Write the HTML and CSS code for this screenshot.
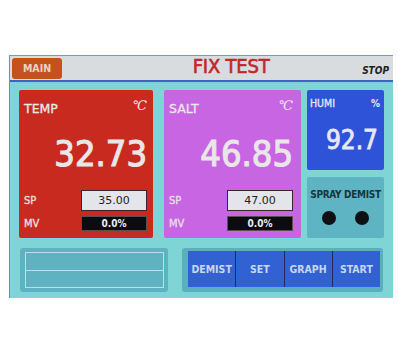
FILE: index.html
```html
<!DOCTYPE html>
<html>
<head>
<meta charset="utf-8">
<link rel="stylesheet" href="styles.css">
</head>
<body>
<div class="screen">
  <div class="header">
    <div class="main-btn">MAIN</div>
    <div class="title">FIX TEST</div>
    <div class="stop">STOP</div>
  </div>
  <div class="panel">
    <div class="cards">
      <div class="card temp">
        <div class="card-top"><span class="lbl">TEMP</span><span class="unit">℃</span></div>
        <div class="big">32.73</div>
        <div class="row sp"><span class="lbl">SP</span><span class="sp-box">35.00</span></div>
        <div class="row mv"><span class="lbl">MV</span><span class="mv-box">0.0%</span></div>
      </div>
      <div class="card salt">
        <div class="card-top"><span class="lbl">SALT</span><span class="unit">℃</span></div>
        <div class="big">46.85</div>
        <div class="row sp"><span class="lbl">SP</span><span class="sp-box">47.00</span></div>
        <div class="row mv"><span class="lbl">MV</span><span class="mv-box">0.0%</span></div>
      </div>
      <div class="side">
        <div class="humi">
          <div class="card-top"><span class="lbl small">HUMI</span><span class="pct">%</span></div>
          <div class="big-h">92.7</div>
        </div>
        <div class="spray">
          <div class="spray-lbl">SPRAY DEMIST</div>
          <div class="dots"><span class="dot"></span><span class="dot"></span></div>
        </div>
      </div>
    </div>
    <div class="bottom">
      <div class="msg">
        <div class="msg-box">
          <div class="msg-line"></div>
          <div class="msg-line"></div>
        </div>
      </div>
      <div class="btns">
        <div class="btn">DEMIST</div>
        <div class="btn">SET</div>
        <div class="btn">GRAPH</div>
        <div class="btn">START</div>
      </div>
    </div>
  </div>
</div>
</body>
</html>
```
FILE: styles.css
```css
html, body {
  margin: 0;
  padding: 0;
  background: #ffffff;
}
body {
  width: 398px;
  height: 349px;
  overflow: hidden;
  font-family: "DejaVu Sans", sans-serif;
}
.screen {
  margin: 55px 0 0 9px;
  width: 384px;
  border-left: 1px solid #6f8bc6;
  border-top: 1px solid #7f95c8;
  box-sizing: border-box;
}
.header {
  height: 26px;
  background: #d9dcde;
  border-bottom: 2px solid #3d62c2;
  box-sizing: border-box;
  display: flex;
  align-items: center;
  padding: 0 3px 0 2px;
}
.main-btn {
  width: 50px;
  height: 21px;
  margin-top: 1px;
  background: #c7511d;
  border-radius: 3px;
  color: #ecd3c6;
  font-family: "DejaVu Sans Condensed", "DejaVu Sans", sans-serif;
  font-size: 10.5px;
  font-weight: bold;
  line-height: 21px;
  text-align: center;
}
.title {
  flex: 1;
  text-align: center;
  color: #c0282a;
  font-family: "DejaVu Sans Condensed", "DejaVu Sans", sans-serif;
  font-size: 20px;
  letter-spacing: -0.2px;
  margin-left: 38px;
  margin-top: -4px;
  -webkit-text-stroke: 0.6px #c0282a;
}
.stop {
  font-family: "DejaVu Sans Condensed", "DejaVu Sans", sans-serif;
  font-size: 10px;
  font-weight: bold;
  font-style: italic;
  color: #1d1d22;
  margin-top: 4px;
  margin-right: 1px;
}
.panel {
  background: #7fd4d6;
  height: 216px;
  padding: 8px 9px 6px 9px;
  box-sizing: border-box;
}
.cards {
  display: flex;
  height: 148px;
}
.card {
  box-sizing: border-box;
  height: 148px;
  border-radius: 2px;
  padding: 11px 6px 7px 5px;
  color: #ece8ea;
  display: flex;
  flex-direction: column;
}
.temp {
  width: 134px;
  background: #c82a1f;
}
.salt {
  width: 137px;
  margin-left: 11px;
  background: #c765e3;
  padding-right: 8px;
}
.card-top {
  height: 15px;
  display: flex;
  justify-content: space-between;
  align-items: center;
}
.lbl {
  font-size: 12.5px;
  line-height: 15px;
  -webkit-text-stroke: 0.3px currentColor;
}
.lbl.small {
  font-family: "DejaVu Sans Condensed", "DejaVu Sans", sans-serif;
  font-size: 10.5px;
}
.unit {
  font-family: "DejaVu Serif", serif;
  font-style: italic;
  font-size: 13px;
  line-height: 15px;
  color: #f0e6ea;
  margin-top: -6px;
}
.big {
  margin-top: 15px;
  height: 46px;
  line-height: 46px;
  text-align: right;
  font-family: "DejaVu Sans Condensed", "DejaVu Sans", sans-serif;
  font-size: 36px;
  color: #e9e6e8;
  -webkit-text-stroke: 1.1px #e9e6e8;
}
.row {
  display: flex;
  justify-content: space-between;
  align-items: center;
}
.row .lbl {
  font-family: "DejaVu Sans Condensed", "DejaVu Sans", sans-serif;
  font-size: 11px;
  color: #e9e0e4;
}
.sp {
  height: 22px;
  margin-top: 12px;
}
.mv {
  height: 15px;
  margin-top: 5px;
}
.sp-box {
  width: 66px;
  height: 21px;
  box-sizing: border-box;
  background: #e4e5ea;
  border: 1px solid #33262c;
  color: #222;
  font-size: 11px;
  line-height: 19px;
  text-align: center;
}
.mv-box {
  width: 66px;
  height: 15px;
  box-sizing: border-box;
  background: #0c0b10;
  border: 1px solid #5a5050;
  color: #eeeeee;
  font-family: "DejaVu Sans Condensed", "DejaVu Sans", sans-serif;
  font-weight: bold;
  font-size: 10px;
  line-height: 13px;
  text-align: center;
}
.side {
  width: 77px;
  margin-left: 6px;
  display: flex;
  flex-direction: column;
}
.humi {
  height: 80px;
  background: #2f53d8;
  border-radius: 2px;
  padding: 6px 4px 0 3px;
  box-sizing: border-box;
  color: #e6e8f2;
}
.pct {
  font-family: "DejaVu Sans Condensed", "DejaVu Sans", sans-serif;
  font-size: 10px;
  font-weight: bold;
}
.big-h {
  margin-top: 16px;
  text-align: right;
  font-family: "DejaVu Sans Condensed", "DejaVu Sans", sans-serif;
  font-size: 26px;
  line-height: 26px;
  padding-right: 2px;
  -webkit-text-stroke: 0.8px #e6e8f2;
}
.spray {
  margin-top: 7px;
  height: 61px;
  background: #5eb4c2;
  border-radius: 2px;
  box-sizing: border-box;
  padding-top: 11px;
}
.spray-lbl {
  text-align: center;
  font-family: "DejaVu Sans Condensed", "DejaVu Sans", sans-serif;
  font-size: 10px;
  font-weight: bold;
  color: #17343e;
  letter-spacing: -0.3px;
  line-height: 14px;
}
.dots {
  display: flex;
  justify-content: space-around;
  padding: 9px 6px 0 6px;
}
.dot {
  width: 14px;
  height: 14px;
  border-radius: 50%;
  background: #0e1014;
}
.bottom {
  display: flex;
  margin-top: 10px;
  height: 44px;
}
.msg {
  width: 148px;
  margin-left: 1px;
  background: #5fb2c0;
  border-radius: 3px;
  padding: 4px 4px 4px 5px;
  box-sizing: border-box;
}
.msg-box {
  height: 100%;
  border: 1px solid #b4e2ea;
  box-sizing: border-box;
  display: flex;
  flex-direction: column;
}
.msg-line {
  flex: 1;
}
.msg-line + .msg-line {
  border-top: 1px solid #b4e2ea;
}
.btns {
  width: 201px;
  margin-left: 14px;
  background: #5ab0bd;
  border-radius: 3px;
  padding: 3px 3px 5px 6px;
  box-sizing: border-box;
  display: flex;
}
.btn {
  flex: 1;
  background: #3262d2;
  border-right: 1px solid #1c2c60;
  color: #c9d6ef;
  font-family: "DejaVu Sans Condensed", "DejaVu Sans", sans-serif;
  font-size: 10.5px;
  font-weight: bold;
  display: flex;
  align-items: center;
  justify-content: center;
}
.btn:last-child {
  border-right: none;
}
```
